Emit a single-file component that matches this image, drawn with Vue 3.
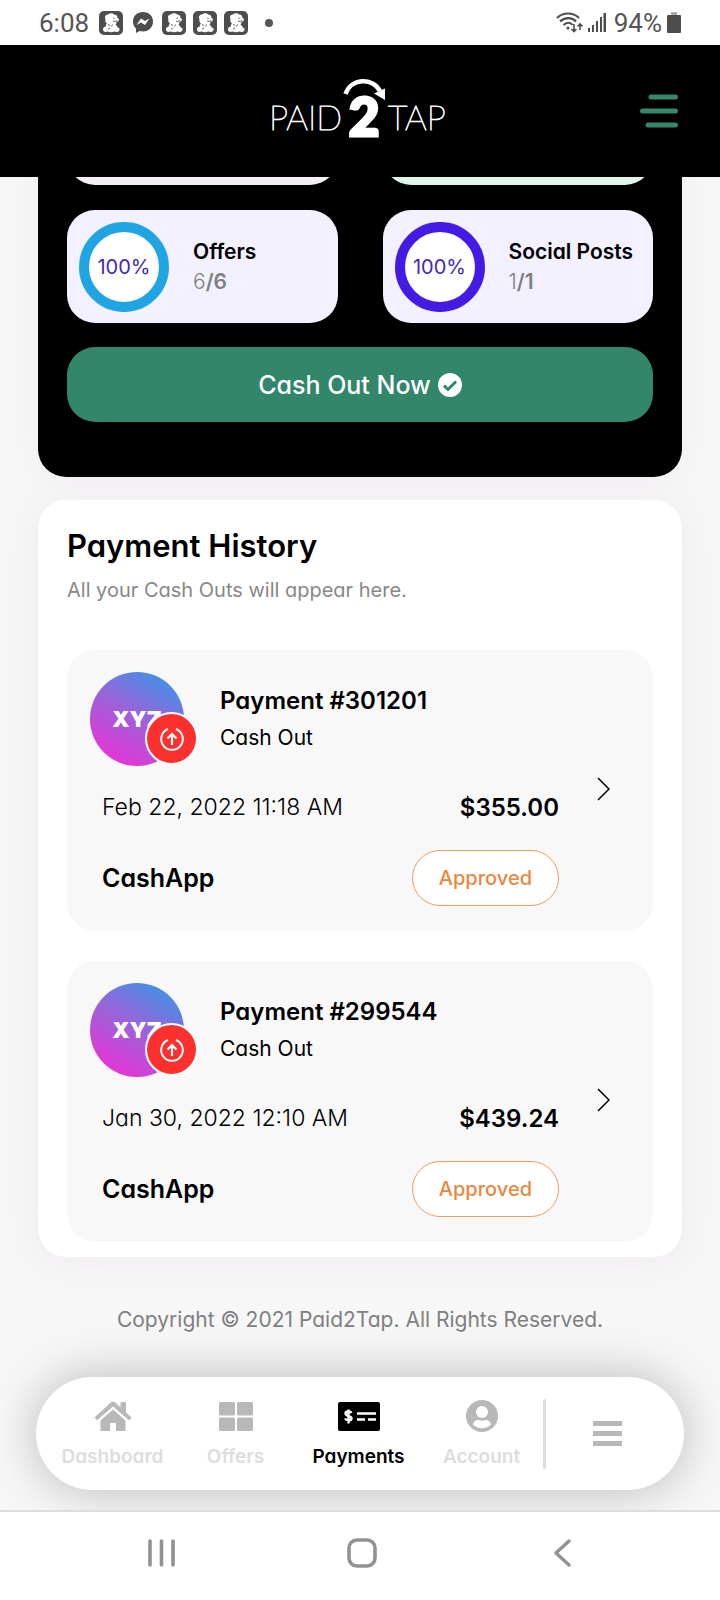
<script setup>
const stats = [
  { label: 'Offers', done: 6, total: 6, percent: '100%', tone: 'blue' },
  { label: 'Social Posts', done: 1, total: 1, percent: '100%', tone: 'violet' },
]
const payments = [
  { id: 301201, date: 'Feb 22, 2022 11:18 AM', amount: '$355.00' },
  { id: 299544, date: 'Jan 30, 2022 12:10 AM', amount: '$439.24' },
]
</script>

<template>
  <div class="page">
    <svg class="defs" aria-hidden="true">
      <symbol id="duck" viewBox="0 0 24 24">
        <rect width="24" height="24" rx="5" fill="#4d4d4d" />
        <path d="M6.500 8C5 5 7 3.500 9 3.500 11 1.500 14 2 15 3.500c2.500 0 3.500 1.500 3.500 3.500l1.500 1c0 2-1 2.500-2.500 2.500 0 2-.5 2.500-1 3.500 1.500.5 2 1.500 2 2.500 1.500 0 2.500 1 2 2.500-.5 2-2.500 2.500-5 1.500-2 1-5 1-7 0-2.500 1-4.500 0-4.500-2s1-2.500 2.500-2.500c0-1.500.5-2.500 1.500-3.500C6.500 11.500 6 10 6.500 8z" fill="#fff" />
        <path d="M15 6.500V8M14 10l2 .5 2-1M9 13.500l2 1M13.500 13.500l-1 2M9 18l2-1" fill="none" stroke="#555" stroke-width=".9" />
      </symbol>
    </svg>

    <div class="status">
      <span class="clock">6:08</span>
      <svg class="app-icon" viewBox="0 0 24 24"><use href="#duck" /></svg>
      <svg class="chat-icon" viewBox="0 0 20 21">
        <path d="M10 0C4 0 0 4 0 9.500c0 3 1 5 3 7V21l3.500-2c8 2 13.500-3 13.500-9.500C20 4 16 0 10 0z" fill="#4d4d4d" />
        <path d="M3.500 13 8 6.500l4 2.500 4.500-2.500L12 13 8 10.500z" fill="#fff" />
      </svg>
      <svg v-for="n in 3" :key="n" class="app-icon" viewBox="0 0 24 24"><use href="#duck" /></svg>
      <span class="dot"></span>
      <div class="system">
        <svg width="27" height="21" viewBox="0 0 27 21" fill="none" stroke="#4d4d4d" stroke-width="2.200">
          <path d="M1 6c6-6 16-6 22 0M4 9.500c5-4.500 12-4.500 16 0M7.500 13c3-3 7-3 9 0" />
          <circle cx="12" cy="16" r="1.500" fill="#4d4d4d" stroke="none" />
          <path d="M18 12v7M15.500 17l2.500 2.500 2.500-2.500M24 18v-6M21.500 14.500 24 12l2.500 2.500" stroke-width="1.600" />
        </svg>
        <svg width="18" height="20" viewBox="0 0 18 20" fill="#4d4d4d">
          <path d="M0 15h2v4H0zM4 12h2v7H4zM8 8h2v11H8zM12 4h2v15h-2zM15.500 0H18v19h-2.500z" />
        </svg>
        <span class="charge">94%</span>
        <svg width="14" height="21" viewBox="0 0 14 21">
          <path d="M4 0h6v3H4z" fill="#aaa" />
          <rect y="3" width="14" height="18" rx="1" fill="#4d4d4d" />
        </svg>
      </div>
    </div>

    <header class="top">
      <svg class="logo" width="180" height="64" viewBox="270 76 180 64" role="img" aria-label="Paid2Tap">
        <text x="269" y="130" class="thin">PAID</text>
        <text x="364" y="136" class="two" text-anchor="middle">2</text>
        <text x="388" y="130" class="thin">TAP</text>
        <path d="M345.500 94C351 78 372 77 380 91" fill="none" stroke="#fff" stroke-width="4.500" />
        <path d="M385 88.500V100l-11-6.500z" fill="#fff" />
      </svg>
      <button class="menu" aria-label="Open menu">
        <svg width="40" height="34" viewBox="0 0 40 34" stroke="#37866d" stroke-width="5" stroke-linecap="round">
          <path d="M11 3h24.500M2.500 17h33M8 31h27.500" />
        </svg>
      </button>
    </header>

    <main>
      <section class="balance">
        <div class="tiles">
          <div class="tile pink"></div>
          <div class="tile mint"></div>
          <div v-for="s in stats" :key="s.label" class="tile">
            <div class="ring" :class="s.tone">{{ s.percent }}</div>
            <div>
              <div class="tile-name">{{ s.label }}</div>
              <div class="tile-count">{{ s.done }}<b>/{{ s.total }}</b></div>
            </div>
          </div>
        </div>
        <button class="cashout">
          Cash Out Now
          <svg width="24" height="24" viewBox="0 0 24 24">
            <circle cx="12" cy="12" r="12" fill="#fff" />
            <path d="m6 12.500 4 4 8-8" fill="none" stroke="#32866a" stroke-width="3" />
          </svg>
        </button>
      </section>

      <section class="history">
        <h1>Payment History</h1>
        <p class="intro">All your Cash Outs will appear here.</p>
        <a v-for="p in payments" :key="p.id" href="#" class="payment">
          <div class="details">
            <div class="head">
              <div class="avatar">
                <span>XYZ</span>
                <div class="badge">
                  <svg width="26" height="26" viewBox="0 0 26 26" fill="none" stroke="#fff" stroke-width="2">
                    <path d="M9 3a10.800 10.800 0 1 0 8 0" />
                    <path d="M13 19V8M8.500 12.500 13 8l4.500 4.500" stroke-width="2.200" />
                  </svg>
                </div>
              </div>
              <div>
                <h2>Payment #{{ p.id }}</h2>
                <div class="kind">Cash Out</div>
              </div>
            </div>
            <div class="row when">
              <span>{{ p.date }}</span>
              <strong>{{ p.amount }}</strong>
            </div>
            <div class="row method">
              <strong>CashApp</strong>
              <span class="pill">Approved</span>
            </div>
          </div>
          <svg width="13" height="24" viewBox="0 0 13 24" fill="none" stroke="#000" stroke-width="1.500">
            <path d="m1 1 11 11L1 23" />
          </svg>
        </a>
      </section>

      <footer>Copyright © 2021 Paid2Tap. All Rights Reserved.</footer>
    </main>

    <nav class="tabs">
      <a href="#">
        <svg width="38" height="32" viewBox="0 0 38 32" fill="#b8b8b8">
          <path d="M.5 17.500 16.500 2.800q2.500-2 5 0l5 4.500V3.500Q26.500 2 28 2h2.500Q32 2 32 3.500v9l5.500 5-2.500 2.700L19 6.500 3 20.200z" />
          <path d="M19 9.500 6.500 20.500V31H16v-8h6v8h9.500V20.500z" />
        </svg>
        <span>Dashboard</span>
      </a>
      <a href="#">
        <svg width="34" height="32" viewBox="0 0 34 32" fill="#b8b8b8">
          <rect y="2" width="16" height="13.500" rx="1.500" /><rect x="18" y="2" width="16" height="13.500" rx="1.500" />
          <rect y="17.500" width="16" height="13.500" rx="1.500" /><rect x="18" y="17.500" width="16" height="13.500" rx="1.500" />
        </svg>
        <span>Offers</span>
      </a>
      <a href="#" class="active" aria-current="page">
        <svg width="42" height="32" viewBox="0 0 42 32">
          <rect y="2" width="42" height="29" rx="2" fill="#000" />
          <path d="M13.500 13c-1-2-6-2-6 .5 0 3 6 2 6 5 0 2.500-5 2.500-6.500 0M10.500 9.500v14M19 13.500h19M19 19.500h8M30 19.500h8" fill="none" stroke="#fff" stroke-width="2.400" />
        </svg>
        <span>Payments</span>
      </a>
      <a href="#">
        <svg width="32" height="32" viewBox="0 0 32 32">
          <circle cx="16" cy="16" r="16" fill="#b8b8b8" />
          <circle cx="16" cy="12" r="6" fill="#fff" />
          <path d="M7 24.500c1-4 4-4.500 5.500-4.500q3.500 1.500 7 0c1.500 0 4.500.5 5.500 4.500-5 5-13 5-18 0z" fill="#fff" />
        </svg>
        <span>Account</span>
      </a>
      <i class="divider"></i>
      <button aria-label="More">
        <svg width="29" height="25" viewBox="0 0 29 25" fill="#b8b8b8"><path d="M0 0h29v5H0zM0 10h29v5H0zM0 20h29v5H0z" /></svg>
      </button>
    </nav>

    <div class="keys">
      <button aria-label="Recent apps">
        <svg width="27" height="28" viewBox="0 0 27 28" stroke="#929292" stroke-width="3.600" stroke-linecap="round"><path d="M2 2v24M13.500 2v24M25 2v24" /></svg>
      </button>
      <button aria-label="Home">
        <svg width="30" height="30" viewBox="0 0 30 30"><rect x="2" y="2" width="26" height="26" rx="8" fill="none" stroke="#929292" stroke-width="3.600" /></svg>
      </button>
      <button aria-label="Back">
        <svg width="17" height="28" viewBox="0 0 17 28" fill="none" stroke="#929292" stroke-width="3.400" stroke-linecap="round" stroke-linejoin="round"><path d="M15 2 2 14l13 12" /></svg>
      </button>
    </div>
  </div>
</template>

<style>
body { background: #f7f7f7; }
</style>

<style scoped>
.page {
  min-height: 100vh;
  display: flex;
  flex-direction: column;
  font-family: Inter, "Liberation Sans", sans-serif;
  font-feature-settings: "cv11";
  color: #000;
  background: #f7f7f7;
}
.page * { box-sizing: border-box; }
.defs { position: absolute; width: 0; height: 0; }
button { border: 0; padding: 0; background: none; font: inherit; font-feature-settings: inherit; cursor: pointer; }
a { color: inherit; text-decoration: none; }
svg { display: block; flex: none; }

.status {
  display: flex;
  align-items: center;
  height: 45px;
  padding: 0 39px;
  background: #fff;
  color: #555;
  font-family: Roboto, sans-serif;
  font-size: 26px;
}
.clock { margin-right: 10px; }
.app-icon { width: 24px; height: 24px; margin-right: 7px; }
.chat-icon { width: 20px; height: 21px; margin: 0 9px 0 3px; }
.dot { width: 8px; height: 8px; margin-left: 10px; border-radius: 50%; background: #555; }
.system { display: flex; align-items: center; gap: 5px; margin-left: auto; }
.charge { margin-left: 3px; }

.top {
  display: grid;
  grid-template-columns: 1fr auto 1fr;
  align-items: center;
  height: 132px;
  padding: 0 40px;
  background: #000;
}
.logo { grid-column: 2; margin-bottom: 6px; overflow: visible; fill: #fff; stroke: #fff; stroke-width: 0; }
.thin { font: 100 34px/40px Lato, sans-serif; stroke-width: 1px; }
.two { font: 900 53px/60px Lato, sans-serif; stroke-width: 3px; }
.menu { justify-self: end; }

main { overflow: hidden; }
.balance {
  margin: -105px 38px 23px;
  padding: 0 29px 55px;
  border-radius: 28px;
  background: #000;
  box-shadow: 0 0 30px rgba(220, 190, 220, .2);
}
.tiles { display: grid; grid-template-columns: 1fr 1fr; gap: 25px 45px; }
.tile {
  display: flex;
  align-items: center;
  gap: 24px;
  height: 113px;
  padding: 0 12px;
  border-radius: 28px;
  background: #f3f0ff;
  white-space: nowrap;
}
.pink { background: #f5eef6; }
.mint { background: #dff6e8; }
.ring {
  display: grid;
  place-items: center;
  flex: none;
  width: 90px;
  height: 90px;
  border: 10px solid;
  border-radius: 50%;
  background: #fff;
  font-size: 20px;
}
.ring { color: #4527b8; }
.blue { border-color: #20a5e2; }
.violet { border-color: #431be2; }
.tile-name { font-size: 21px; line-height: 30px; font-weight: 600; }
.tile-count { font-size: 21px; line-height: 30px; font-weight: 300; color: #808080; }
.tile-count b { font-weight: 600; }
.cashout {
  display: flex;
  align-items: center;
  justify-content: center;
  gap: 7px;
  width: 100%;
  height: 75px;
  margin-top: 24px;
  border-radius: 28px;
  background: #32866a;
  color: #fff;
  font-size: 25px;
  font-weight: 500;
}

.history {
  margin: 0 38px;
  padding: 26px 29px 15px;
  border-radius: 28px;
  background: #fff;
  box-shadow: 0 4px 36px rgba(220, 190, 220, .22);
}
h1 { margin: 0; font-size: 31px; line-height: 40px; font-weight: 600; }
.intro { margin: 10px 0 46px; font-size: 20px; line-height: 28px; font-weight: 400; color: #888; }
.payment {
  display: flex;
  align-items: center;
  gap: 38px;
  padding: 22px 43px 25px 23px;
  border-radius: 28px;
  background: #f8f8f8;
}
.payment + .payment { margin-top: 30px; }
.details { flex: 1; }
.head { display: flex; align-items: center; gap: 36px; }
.avatar {
  position: relative;
  display: grid;
  place-items: center;
  width: 94px;
  height: 94px;
  border-radius: 50%;
  background: linear-gradient(30deg, #e038d6 15%, #a060d8 50%, #3f92e6 90%);
  color: #fff;
  font-size: 22px;
  font-weight: 900;
}
.badge {
  position: absolute;
  right: -14px;
  bottom: 1px;
  display: grid;
  place-items: center;
  width: 53px;
  height: 53px;
  border: 2px solid #fff;
  border-radius: 50%;
  background: #fd3030;
}
h2 { margin: 0; font-size: 24px; line-height: 38px; font-weight: 600; }
.kind { font-size: 21px; line-height: 36px; font-weight: 400; }
.row { display: flex; align-items: center; justify-content: space-between; padding-left: 12px; }
.row strong { font-size: 24px; font-weight: 600; }
.row.method strong { font-size: 25px; }
.when { height: 36px; margin: 23px 0 25px; font-size: 23px; font-weight: 300; }
.pill {
  height: 56px;
  padding: 0 26px;
  border: 1px solid #ee9b5d;
  border-radius: 28px;
  background: #fff;
  color: #e9873f;
  font-size: 20px;
  line-height: 54px;
  font-weight: 500;
}
footer {
  padding: 49px 0 43px;
  text-align: center;
  font-size: 21px;
  line-height: 28px;
  font-weight: 400;
  color: #808080;
}

.tabs {
  display: flex;
  align-items: center;
  height: 113px;
  margin: 0 36px 20px;
  padding: 0 15px;
  border-radius: 57px;
  background: #fff;
  box-shadow: 0 0 50px rgba(0, 0, 0, .25);
  color: #ddd;
  font-size: 19px;
  font-weight: 600;
}
.tabs a, .tabs button { display: flex; flex: 1 1 0; flex-direction: column; align-items: center; gap: 12px; }
.tabs a { padding-top: 2px; line-height: 26px; }
.tabs span { white-space: nowrap; }
.active { color: #000; }
.divider { width: 3px; height: 70px; border-radius: 2px; background: #ddd; }
.keys {
  position: relative;
  display: flex;
  flex: 1;
  min-height: 90px;
  padding: 0 57px 6px 61px;
  border-top: 2px solid #ddd;
  background: #fff;
}
.keys button { display: grid; place-items: center; flex: 1; }
</style>
